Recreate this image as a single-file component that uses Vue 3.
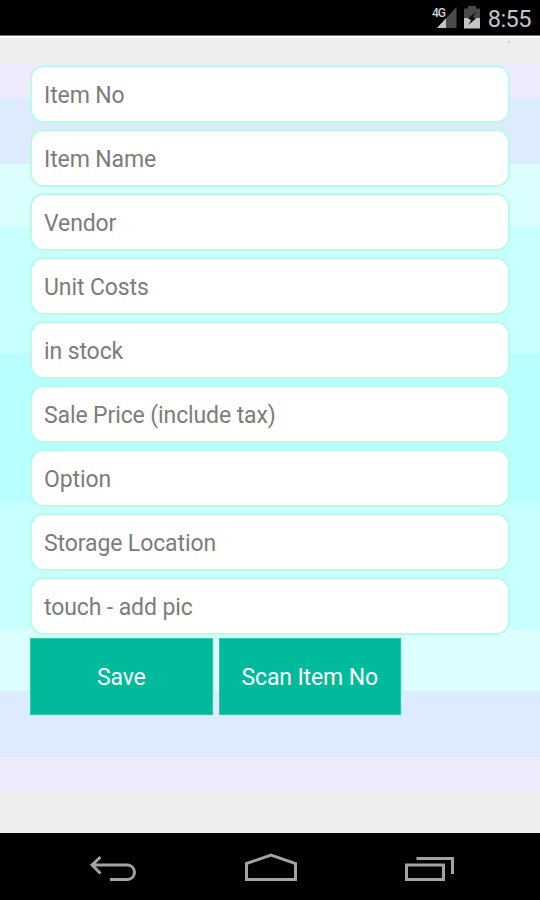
<script setup>
const fields = [
  'Item No',
  'Item Name',
  'Vendor',
  'Unit Costs',
  'in stock',
  'Sale Price (include tax)',
  'Option',
  'Storage Location',
  'touch - add pic',
]
const actions = ['Save', 'Scan Item No']
</script>

<template>
  <div class="screen">
    <header class="status">
      <svg class="signal" width="26" height="24" viewBox="0 0 26 24">
        <path d="M5 22L24.500 1V22Z" fill="#4a4a4a" />
        <path d="M5 22L14 12.300V22Z" fill="#c4c4c4" />
        <text x="0" y="10.500" class="network">4G</text>
      </svg>
      <svg class="battery" width="16" height="24" viewBox="0 0 16 24">
        <path d="M0 2.500H4V0H12V2.500H16V13H0Z" fill="#4a4a4a" />
        <path d="M0 12H16V22.500H0Z" fill="#c4c4c4" />
        <path d="M12 5.500L4 12.500L7 14L4.500 19L12 12.500L9 11Z" fill="#111" />
      </svg>
      <span class="clock">8:55</span>
    </header>
    <main class="content">
      <i class="speck"></i>
      <div class="form">
        <div v-for="field in fields" :key="field" class="field">{{ field }}</div>
      </div>
      <div class="actions">
        <button v-for="action in actions" :key="action" class="action">{{ action }}</button>
      </div>
    </main>
    <nav class="navbar">
      <svg width="48" height="30" viewBox="0 0 48 30" fill="none" stroke="#a3a3a3" stroke-width="3">
        <path d="M10.500 4L2 12L10.500 20.500M2 12H38A7.300 7.300 0 0 1 38 26.500H20" />
      </svg>
      <svg class="home" width="52" height="30" viewBox="0 0 52 30" fill="none" stroke="#a3a3a3" stroke-width="3">
        <path d="M1.500 10.500L26 2.200L50.500 10.500V26.500H1.500Z" />
      </svg>
      <svg width="50" height="30" viewBox="0 0 50 30" fill="none" stroke="#a3a3a3" stroke-width="3">
        <path d="M1.500 12H38.500V26.500H1.500ZM11.500 5.500H47.500V21" />
      </svg>
    </nav>
  </div>
</template>

<style>
body {
  margin: 0;
}
</style>

<style scoped>
.screen {
  display: flex;
  flex-direction: column;
  width: 540px;
  height: 900px;
  overflow: hidden;
  background: #000;
  font-family: Roboto, sans-serif;
}
.status {
  box-sizing: border-box;
  height: 35px;
  padding-right: 9px;
  display: flex;
  justify-content: flex-end;
  align-items: center;
  color: #c4c4c4;
}
.signal {
  margin: 1px 6px 0 0;
}
.battery {
  margin: 1px 8px 0 0;
}
.network {
  font-size: 12px;
  font-weight: 500;
  letter-spacing: -1px;
  fill: #d0d0d0;
}
.clock {
  font-size: 23.500px;
  line-height: 35px;
  padding-top: 3px;
  letter-spacing: -0.500px;
}
.content {
  position: relative;
  box-sizing: border-box;
  height: 798px;
  padding: 29px 30px 0;
  border-top: 1px solid #777;
  background: linear-gradient(
    #fff 2px,
    #eee 2px 28px,
    #eeebfd 28px 62px,
    #dcebfe 62px 128px,
    #dbffff 128px 190px,
    #c8ffff 190px 317px,
    #b8ffff 317px 466px,
    #c8ffff 466px 593px,
    #dbffff 593px 655px,
    #dcebfe 655px 721px,
    #eeebfd 721px 756px,
    #eee 756px
  );
}
.speck {
  position: absolute;
  top: 5px;
  right: 30px;
  width: 2px;
  height: 2px;
  background: #ccc;
}
.form {
  display: flex;
  flex-direction: column;
  gap: 6px;
}
.field {
  box-sizing: border-box;
  height: 58px;
  padding-left: 12px;
  border: 2px solid #b8fde2;
  border-radius: 14px;
  background: #fff;
  color: #7c7c7c;
  font-size: 23px;
  letter-spacing: -0.110px;
  line-height: 58px;
}
.actions {
  display: flex;
  gap: 6px;
  margin-top: 3px;
}
.action {
  width: 182.500px;
  height: 77px;
  padding: 2px 0 0;
  border: 1px solid #2fc5a8;
  background: #00bb9b;
  color: #fff;
  font-family: inherit;
  font-size: 23px;
  letter-spacing: -0.110px;
}
.navbar {
  height: 67px;
  display: flex;
  justify-content: space-between;
  padding: 20px 85px 0 90px;
  box-sizing: border-box;
}
.home {
  margin: 0 1px 0 -1px;
}
</style>
